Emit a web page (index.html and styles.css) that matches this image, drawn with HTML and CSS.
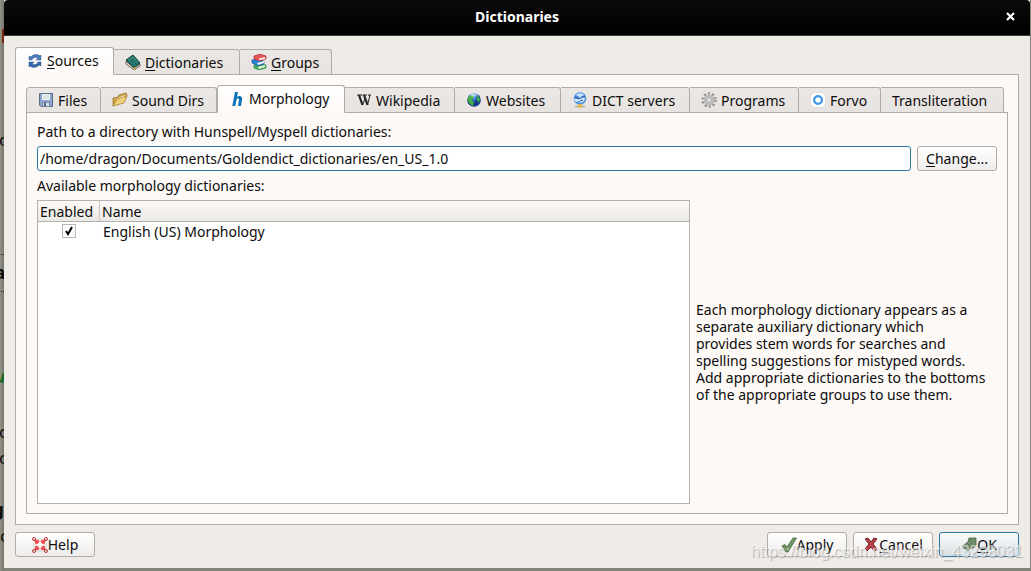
FILE: index.html
```html
<!DOCTYPE html>
<html lang="en">
<head>
<meta charset="utf-8">
<title>Dictionaries</title>
<link rel="stylesheet" href="styles.css">
</head>
<body>
<div class="backdrop" aria-hidden="true">
  <span class="bit bit-red">l</span>
  <span class="bit bit-c1">c</span>
  <span class="bit bit-rule1"></span>
  <span class="bit bit-a">a</span>
  <span class="bit bit-rule2"></span>
  <span class="bit bit-u">u</span>
  <span class="bit bit-c2">c</span>
  <span class="bit bit-c3">c</span>
  <span class="bit bit-g">g</span>
  <span class="bit bit-c4">c</span>
</div>
<main class="window">
  <header class="titlebar">
    <h1 class="title">Dictionaries</h1>
    <button class="close" aria-label="Close"><svg width="9" height="9" viewBox="0 0 9 9"><path d="M1 1l7 7M8 1l-7 7" stroke="#fff" stroke-width="2.2"/></svg></button>
  </header>
  <div class="content">
    <div class="tabs tabs-outer" role="tablist">
      <button class="tab active" role="tab" aria-selected="true"><svg class="icon" viewBox="0 0 16 16"><path d="M2 7V3l2 1c2-3 7-3 9-1l1-1v5H9l2-2C9 4 6 4 5 7z" fill="#4c7dbb" stroke="#34609b" stroke-width=".5"/><path d="M14 9v4l-2-1c-2 3-7 3-9 1l-1 1V9h5l-2 2c2 1 5 1 6-2z" fill="#3568ab" stroke="#28518d" stroke-width=".5"/></svg><span><u>S</u>ources</span></button>
      <button class="tab" role="tab"><svg class="icon" viewBox="0 0 16 16"><path d="M1 7l8 7 6-4v2l-6 4-8-6z" fill="#d5d0ba" stroke="#45422f" stroke-width=".7"/><path d="M1 6l7-5 7 8-6 5z" fill="#24736c" stroke="#123f3b"/><path d="M3 6l5-3 4 5" fill="none" stroke="#4d9a8d"/><path d="M9 13v3l2-1v-2z" fill="#c49a34"/></svg><span><u>D</u>ictionaries</span></button>
      <button class="tab" role="tab"><svg class="icon" viewBox="0 0 16 16"><path d="M3 11l6-2 6 2v3l-7 2-5-2z" fill="#40b65a" stroke="#23733b" stroke-width=".6"/><path d="M7 13l7-2v2l-6 2z" fill="#eef3e9"/><path d="M1 6l6-1 6 2v3l-6 2-6-3z" fill="#2680d4" stroke="#155294" stroke-width=".6"/><path d="M6 9l7-2v2l-6 2z" fill="#eff2f5"/><path d="M3 2l6-2 6 2v3L8 7 3 5z" fill="#e45458" stroke="#a62930" stroke-width=".6"/><path d="M8 4.500l6-1.500v2L8 6.300z" fill="#fbeaea"/></svg><span><u>G</u>roups</span></button>
    </div>
    <section class="pane pane-outer">
      <div class="tabs tabs-inner" role="tablist">
        <button class="tab" role="tab"><svg class="icon" viewBox="0 0 16 16"><path d="M1.500 1.500h13v13H3l-1.500-1.500z" fill="#8aa6cc" stroke="#5a6d89"/><path d="M4 2h8v6H4z" fill="#f2f4f6"/><path d="M5 4h6M5 6h6" stroke="#c6ced7"/><path d="M4.500 10.500h7v4h-7z" fill="#e0e5ea" stroke="#7386a0"/><path d="M6 11h2v3H6z" fill="#4b6182"/></svg><span>Files</span></button>
        <button class="tab" role="tab"><svg class="icon" viewBox="0 0 16 16"><path d="M1 14V6l5-1 1-2 7-2 1 2-3 7z" fill="#d0a443" stroke="#927433" stroke-width=".8"/><path d="M4 7l9-4-1 3z" fill="#fffbe7"/><path d="M1 14l4-7 10-3-3 7z" fill="#efd078" stroke="#a98849" stroke-width=".8"/></svg><span>Sound Dirs</span></button>
        <button class="tab active" role="tab" aria-selected="true"><svg class="icon" viewBox="0 0 16 16"><path d="M6 1h3L8 6c2-2 6-1 5 2.500L12 15H9l1-6c.4-2-2.300-2-2.700.500L6.300 15h-3z" fill="#0872b4"/></svg><span>Morphology</span></button>
        <button class="tab" role="tab"><svg class="icon" viewBox="0 0 16 16"><path d="M1 3h5M6.500 3H11M12 3h3" stroke="#222"/><path d="M3 3l3.500 10" stroke="#222" stroke-width="2.200"/><path d="M8 3l3.500 10" stroke="#222" stroke-width="2.200"/><path d="M6.500 13L9 6.500M11.500 13l2.500-10" stroke="#222"/></svg><span>Wikipedia</span></button>
        <button class="tab" role="tab"><svg class="icon" viewBox="0 0 16 16"><defs><radialGradient id="globe" cx=".4" cy=".2"><stop stop-color="#d7efff"/><stop offset=".5" stop-color="#3a7fd8"/><stop offset="1" stop-color="#123a86"/></radialGradient></defs><circle cx="8" cy="8" r="6.800" fill="url(#globe)"/><path d="M3 4l3-1 2 1-1 3-2 1 3 2-1 4C4 13 1 9 2 6zM11 3l3 4-1 4-2-3z" fill="#43b044"/><path d="M4 4c2-3 6-3 8-1-2 2-6 2-8 1z" fill="#fff" opacity=".45"/></svg><span>Websites</span></button>
        <button class="tab" role="tab"><svg class="icon" viewBox="0 0 16 16"><circle cx="8" cy="6.500" r="6.300" fill="#5797e1"/><path d="M4 3c2-2 6-2 8 0l-4 2z" fill="#cfe6ff"/><path d="M2 7h5l1-2 5 1-1 3-3 2-2-2-3 1z" fill="#d8eeff"/><path d="M3 5l4 2 6-3M8 9l3-1" stroke="#235094" fill="none"/><path d="M3 14.500h10" stroke="#aaa" stroke-width="1.500"/><path d="M6 12h4v3.500H6z" fill="#e6b54d"/></svg><span>DICT servers</span></button>
        <button class="tab" role="tab"><svg class="icon" viewBox="0 0 16 16"><circle cx="8" cy="8" r="6.500" fill="none" stroke="#8e8e8e" stroke-width="2.400" stroke-dasharray="2.050 2.050"/><circle cx="8" cy="8" r="4.300" fill="#e8e5e3" stroke="#bcbcbc" stroke-width="2.500"/><circle cx="8" cy="8" r="2.500" fill="#e8e5e3" stroke="#888" stroke-width=".7"/></svg><span>Programs</span></button>
        <button class="tab" role="tab"><svg class="icon" viewBox="0 0 16 16"><rect x=".5" y=".5" width="15" height="15" rx="5" fill="#fff" stroke="#e0dfdd"/><circle cx="8" cy="8" r="3.900" fill="none" stroke="#3d95ed" stroke-width="2.200"/></svg><span>Forvo</span></button>
        <button class="tab" role="tab"><span>Transliteration</span></button>
      </div>
      <section class="pane pane-inner">
        <label class="caption" for="path">Path to a directory with Hunspell/Myspell dictionaries:</label>
        <div class="path-row">
          <input class="path" id="path" type="text" value="/home/dragon/Documents/Goldendict_dictionaries/en_US_1.0">
          <button class="button"><span><u>C</u>hange...</span></button>
        </div>
        <div class="caption" id="available">Available morphology dictionaries:</div>
        <div class="lower">
          <div class="list">
            <table class="table" aria-labelledby="available">
              <thead><tr><th class="col-enabled">Enabled</th><th>Name</th></tr></thead>
              <tbody><tr><td class="cell-check"><input class="check" id="en" type="checkbox" checked></td><td class="cell-name"><label for="en">English (US) Morphology</label></td></tr></tbody>
            </table>
          </div>
          <p class="note">Each morphology dictionary appears as a separate auxiliary dictionary which provides&nbsp;stem words for searches and spelling suggestions for mistyped words.<br>Add appropriate dictionaries to the bottoms of the appropriate groups to use them.</p>
        </div>
      </section>
    </section>
    <footer class="actions">
      <button class="button help"><svg class="icon" viewBox="0 0 16 16"><rect x="2.500" y="2.500" width="11" height="11" rx="4" fill="none" stroke="#e2e2e2" stroke-width="3"/><path d="M3 3l4 1-1 2-2 1zM13 3L9 4l1 2 2 1zM3 13l4-1-1-2-2-1zM13 13l-4-1 1-2 2-1z" fill="#f04a4a" stroke="#f04a4a"/><g fill="none" stroke="#b52c30"><circle cx="2" cy="2" r="1.500"/><circle cx="14" cy="2" r="1.500"/><circle cx="2" cy="14" r="1.500"/><circle cx="14" cy="14" r="1.500"/></g></svg><span>Help</span></button>
      <button class="button"><svg class="icon" viewBox="0 0 16 16"><path d="M1 9l3-1.500L6 10l6-9h3.500L7 15H5z" fill="#6d9465" stroke="#4a6843" stroke-width=".8"/></svg><span>Apply</span></button>
      <button class="button"><svg class="icon" viewBox="0 0 16 16"><path d="M2 2l3-1 3 4 3-4 3 1-4 5 4 5-3 2-3-4-4 4-2-2 4-5z" fill="#bd4048" stroke="#6c2228"/></svg><span><u>C</u>ancel</span></button>
      <button class="button default"><svg class="icon" viewBox="0 0 16 16"><path d="M8 1h7v7l-3 3H7v3L1 9.500 7 5v2h2V5H7z" fill="#6f8d68" stroke="#4c5f48" stroke-width=".8"/></svg><span><u>O</u>K</span></button>
    </footer>
  </div>
</main>
<div class="watermark">https://blog.csdn.net/weixin_43298031</div>
</body>
</html>
```

FILE: styles.css
```css
* { box-sizing: border-box; }
body {
  margin: 0;
  min-height: 100vh;
  display: flex;
  padding: 0 1px 3px 4px;
  background: #85847a;
  color: #0c0c0c;
  font: 14px/17px "Noto Sans", "Open Sans", sans-serif;
  overflow: hidden;
}
button, input { font: inherit; color: inherit; }
u { text-underline-offset: 2px; }
.backdrop {
  position: absolute;
  inset: 0 auto 0 0;
  width: 4px;
  overflow: hidden;
  background: linear-gradient(90deg, #929187, #77766e);
}
.bit { position: absolute; left: -3px; font-size: 17px; }
.bit-red { top: 28px; left: 1px; color: #702010; font-weight: bold; }
.bit-c1 { top: 131px; left: -1px; }
.bit-a { top: 264px; left: -5px; font-weight: bold; }
.bit-u { top: 368px; left: -5px; color: #0b6d1a; font-style: italic; font-weight: bold; }
.bit-c2 { top: 423px; left: -1px; }
.bit-c3 { top: 449px; left: -1px; }
.bit-g { top: 501px; left: -7px; font-weight: bold; }
.bit-c4 { top: 527px; left: 0; }
.bit-rule1, .bit-rule2 { width: 7px; border-top: 1px dotted #222; }
.bit-rule1 { top: 254px; }
.bit-rule2 { top: 291px; }
.window {
  position: relative;
  flex: 1;
  display: flex;
  flex-direction: column;
  background: #efebe7;
}
.titlebar {
  height: 36px;
  display: grid;
  grid-template-columns: 40px 1fr 40px;
  align-items: center;
  padding-bottom: 2px;
  background: linear-gradient(#0a0a0a, #000);
  border-bottom: 1px solid #3c3b37;
  border-radius: 4px 4px 0 0;
  color: #fff;
}
.title { grid-column: 2; margin: 0; text-align: center; font-size: 14px; line-height: 17px; }
.close { display: grid; place-items: center; padding: 0; border: 0; background: none; }
.content { flex: 1; display: flex; flex-direction: column; padding: 11px; }
.tabs { display: grid; align-items: end; position: relative; z-index: 1; margin-bottom: -1px; }
.tabs-outer { grid-template-columns: 99px 126px 92px; }
.tabs-inner { grid-template-columns: 75px 116px 128px 110px 106px 129px 109px 82px 123px; }
.tab {
  height: 26px;
  display: flex;
  align-items: center;
  gap: 4px;
  padding: 0 0 0 11px;
  border: 1px solid #b0aba7;
  border-left-width: 0;
  border-radius: 0 3px 0 0;
  background: linear-gradient(#ebe7e4, #e7e3e0);
  white-space: nowrap;
}
.tab:first-child { border-left-width: 1px; border-radius: 3px 3px 0 0; }
.tab.active {
  height: 28px;
  padding-bottom: 1px;
  border-left-width: 1px;
  border-bottom-color: #fdf9f6;
  border-radius: 3px 3px 0 0;
  background: linear-gradient(#fff, #fdf9f6);
}
.icon { width: 16px; height: 16px; flex: none; }
.pane { display: flex; flex-direction: column; flex: 1; border: 1px solid #b0aba7; background: #fdf9f6; }
.pane-outer { padding: 10px; }
.pane-inner { padding: 10px 10px 9px; }
.caption { display: block; height: 17px; line-height: 17px; margin-bottom: 6px; }
.path-row { display: flex; gap: 6px; margin-bottom: 6px; }
.path {
  flex: 1;
  min-width: 0;
  height: 25px;
  padding: 0 2px;
  border: 1px solid #2b76a6;
  border-radius: 3px;
  background: #fff;
  outline: 0;
}
.button {
  width: 80px;
  height: 25px;
  display: flex;
  align-items: center;
  justify-content: center;
  padding: 0;
  border: 1px solid #b0aba7;
  border-radius: 3px;
  background: linear-gradient(#fff, #efedeb);
}
.lower { flex: 1; display: grid; grid-template-columns: 1fr 301px; gap: 6px; }
.list { border: 1px solid #b5b1ae; background: #fff; }
.table { width: 100%; border-collapse: separate; border-spacing: 0; }
.table th {
  height: 21px;
  padding: 0 2px;
  border-bottom: 1px solid #b5b1ae;
  background: linear-gradient(#fdf9f6, #eae8e5);
  font-weight: normal;
  text-align: left;
}
.table .col-enabled { width: 62px; border-right: 1px solid #cbc7c4; }
.table td { height: 18px; padding: 0; }
.table .cell-name { padding-left: 3px; }
.table .cell-check { line-height: 0; text-align: center; }
.check {
  appearance: none;
  width: 14px;
  height: 14px;
  margin: 0;
  border: 1px solid #b9b6b3;
  background: #fff url("data:image/svg+xml,%3Csvg xmlns='http://www.w3.org/2000/svg' viewBox='0 0 12 12'%3E%3Cpath d='M3 6l2 3 4-7' fill='none' stroke='%23000' stroke-width='2'/%3E%3C/svg%3E");
}
.note { align-self: center; margin: 0; }
.actions { display: flex; gap: 6px; margin-top: 7px; }
.help { margin-right: auto; }
.default { border-color: #2b76a6; background: linear-gradient(#fafbfb, #d9e0e4); }
.watermark {
  position: absolute;
  right: 8px;
  bottom: 9px;
  color: rgba(255, 255, 255, .6);
  font: 16px/20px "Liberation Sans", sans-serif;
  text-shadow: 1px 1px 1px rgba(120, 120, 120, .5);
  pointer-events: none;
}
```
